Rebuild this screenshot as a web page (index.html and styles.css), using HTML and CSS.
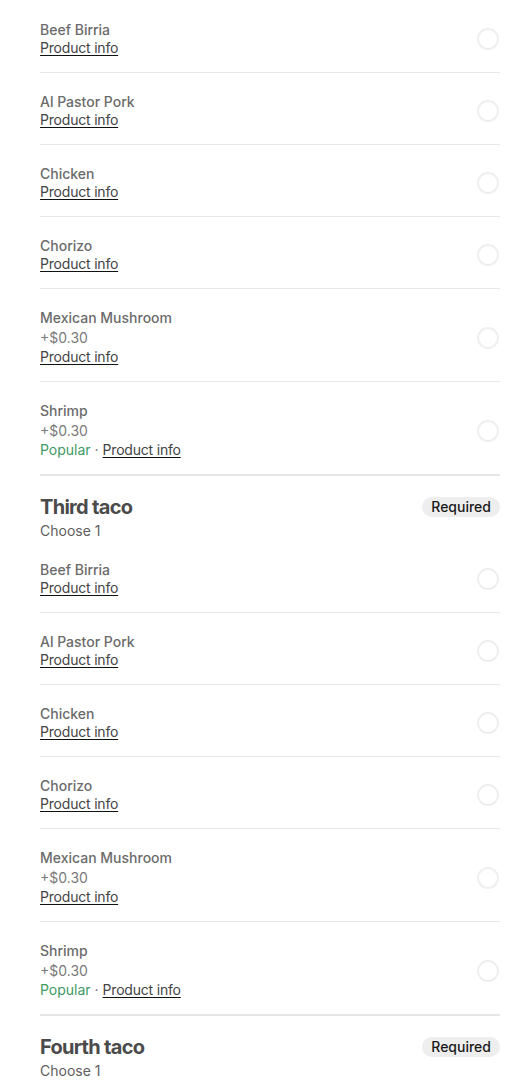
FILE: index.html
```html
<!DOCTYPE html>
<html lang="en">
<head>
<meta charset="utf-8">
<meta name="viewport" content="width=device-width, initial-scale=1.0">
<title>Build your tacos</title>
<link rel="stylesheet" href="styles.css">
</head>
<body>
<div class="options">

<!-- Second taco (tail of the list) -->
<section class="group">
  <label class="option">
    <div class="option-text">
      <div class="option-name">Beef Birria</div>
      <div class="option-meta"><a class="info" href="#">Product info</a></div>
    </div>
    <span class="radio"></span>
  </label>
  <label class="option">
    <div class="option-text">
      <div class="option-name">Al Pastor Pork</div>
      <div class="option-meta"><a class="info" href="#">Product info</a></div>
    </div>
    <span class="radio"></span>
  </label>
  <label class="option">
    <div class="option-text">
      <div class="option-name">Chicken</div>
      <div class="option-meta"><a class="info" href="#">Product info</a></div>
    </div>
    <span class="radio"></span>
  </label>
  <label class="option">
    <div class="option-text">
      <div class="option-name">Chorizo</div>
      <div class="option-meta"><a class="info" href="#">Product info</a></div>
    </div>
    <span class="radio"></span>
  </label>
  <label class="option">
    <div class="option-text">
      <div class="option-name">Mexican Mushroom</div>
      <div class="option-price">+$0.30</div>
      <div class="option-meta"><a class="info" href="#">Product info</a></div>
    </div>
    <span class="radio"></span>
  </label>
  <label class="option">
    <div class="option-text">
      <div class="option-name">Shrimp</div>
      <div class="option-price">+$0.30</div>
      <div class="option-meta"><span class="popular">Popular</span> <span class="dot">&middot;</span> <a class="info" href="#">Product info</a></div>
    </div>
    <span class="radio"></span>
  </label>
</section>

<!-- Third taco -->
<section class="group">
  <div class="group-head">
    <div>
      <h2 class="group-title">Third taco</h2>
      <div class="group-sub">Choose 1</div>
    </div>
    <span class="pill">Required</span>
  </div>
  <label class="option">
    <div class="option-text">
      <div class="option-name">Beef Birria</div>
      <div class="option-meta"><a class="info" href="#">Product info</a></div>
    </div>
    <span class="radio"></span>
  </label>
  <label class="option">
    <div class="option-text">
      <div class="option-name">Al Pastor Pork</div>
      <div class="option-meta"><a class="info" href="#">Product info</a></div>
    </div>
    <span class="radio"></span>
  </label>
  <label class="option">
    <div class="option-text">
      <div class="option-name">Chicken</div>
      <div class="option-meta"><a class="info" href="#">Product info</a></div>
    </div>
    <span class="radio"></span>
  </label>
  <label class="option">
    <div class="option-text">
      <div class="option-name">Chorizo</div>
      <div class="option-meta"><a class="info" href="#">Product info</a></div>
    </div>
    <span class="radio"></span>
  </label>
  <label class="option">
    <div class="option-text">
      <div class="option-name">Mexican Mushroom</div>
      <div class="option-price">+$0.30</div>
      <div class="option-meta"><a class="info" href="#">Product info</a></div>
    </div>
    <span class="radio"></span>
  </label>
  <label class="option">
    <div class="option-text">
      <div class="option-name">Shrimp</div>
      <div class="option-price">+$0.30</div>
      <div class="option-meta"><span class="popular">Popular</span> <span class="dot">&middot;</span> <a class="info" href="#">Product info</a></div>
    </div>
    <span class="radio"></span>
  </label>
</section>

<!-- Fourth taco -->
<section class="group">
  <div class="group-head">
    <div>
      <h2 class="group-title">Fourth taco</h2>
      <div class="group-sub">Choose 1</div>
    </div>
    <span class="pill">Required</span>
  </div>
</section>

</div>
</body>
</html>
```

FILE: styles.css
```css
body {
  margin: 0;
  background: #ffffff;
  font-family: Inter, "Noto Sans", sans-serif;
  font-size: 14px;
  color: #6b6b6b;
}

.options {
  padding: 1px 24px 0 40px;
}

/* each modifier group ends with a heavier rule */
.group {
  border-bottom: 2px solid #e6e6e6;
}
.group:last-child {
  border-bottom: none;
}

.group-head {
  display: flex;
  justify-content: space-between;
  align-items: flex-start;
  padding-top: 17px;
}
.group-title {
  margin: 0;
  font-size: 20px;
  line-height: 28px;
  font-weight: 700;
  letter-spacing: -0.7px;
  color: #4b4b4b;
}
.group-sub {
  line-height: 20px;
  color: #5e5e5e;
}
.pill {
  margin-top: 4px;
  padding: 0 9px;
  height: 20px;
  line-height: 20px;
  border-radius: 10px;
  background: #eeeeee;
  color: #1a1a1a;
  font-weight: 500;
}

.option {
  display: flex;
  align-items: center;
  justify-content: space-between;
  padding: 20px 0 15px;
  border-bottom: 1px solid #e8e8e8;
}
.group .option:last-child {
  border-bottom: none;
}
.option-name {
  line-height: 18px;
  font-weight: 500;
  color: #6b6b6b;
}
.option-price {
  line-height: 21px;
  color: #7a7a7a;
}
.option-meta {
  line-height: 18px;
}
.info {
  color: #444444;
  letter-spacing: -0.2px;
  text-decoration: underline;
  text-decoration-color: #111;
  text-underline-offset: 2px;
}
.popular {
  color: #3f9a63;
}
.dot {
  color: #6b6b6b;
}

.radio {
  width: 18px;
  height: 18px;
  margin-right: 1px;
  border: 2px solid #efefef;
  border-radius: 50%;
  flex-shrink: 0;
}
```
